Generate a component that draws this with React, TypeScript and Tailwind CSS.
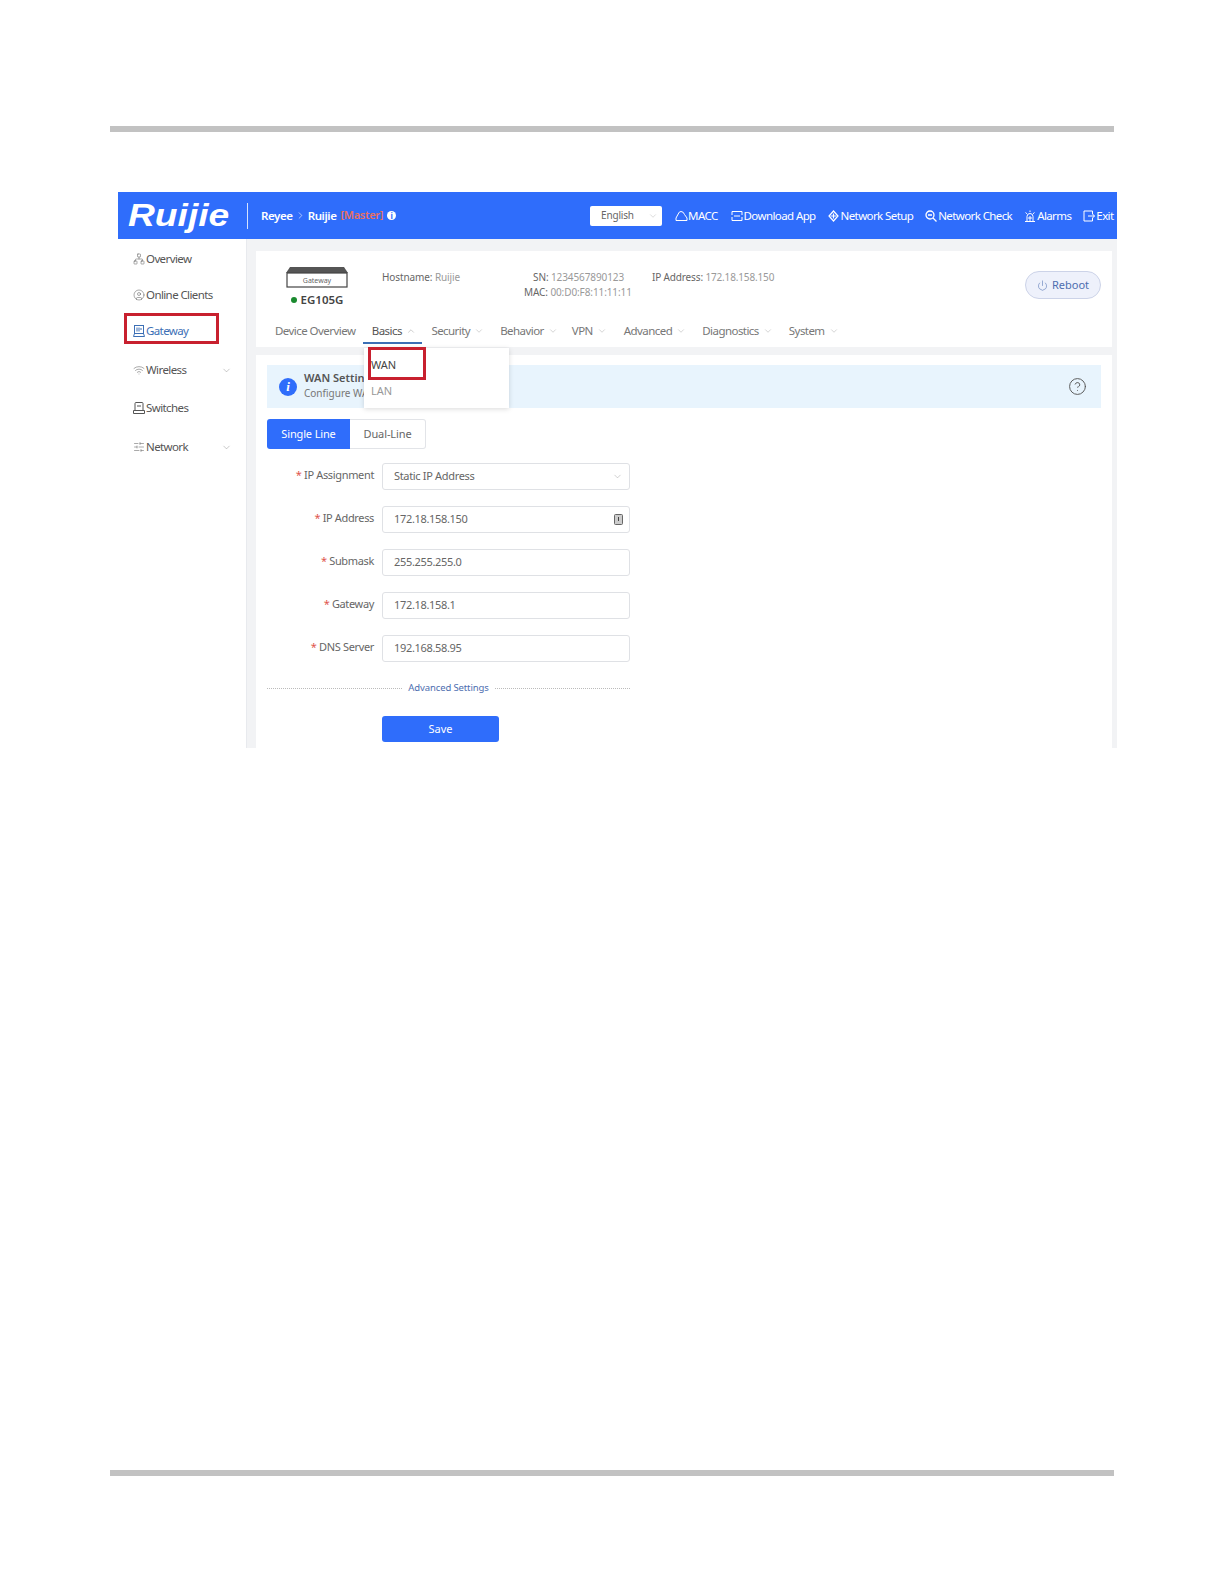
import React from "react";
import { ChevronDown, ChevronUp, ChevronRight, Network, CircleUser, Wifi, SlidersHorizontal, Power, CircleHelp } from "lucide-react";

const font = { fontFamily: '"Noto Sans", "Noto Sans CJK SC", sans-serif' };

function Side({ icon, label, active, chevron, cls }: { icon: React.ReactNode; label: string; active?: boolean; chevron?: boolean; cls: string }) {
  return (
    <div className={`flex items-center h-[20px] pl-[15px] pr-[14px] ${cls} ${active ? "text-[#3c6fb5]" : "text-[#555]"}`}>
      <span className="w-[13px] flex justify-start">{icon}</span>
      <span className="text-[11.5px] tracking-[-0.6px]">{label}</span>
      {chevron && <ChevronDown size={11} strokeWidth={1} className="ml-auto text-[#888]" />}
    </div>
  );
}

function TopLink({ icon, label, cls }: { icon: React.ReactNode; label: string; cls: string }) {
  return (
    <div className={`flex items-center shrink-0 text-white ${cls}`}>
      <span className="w-[13px] flex justify-start">{icon}</span>
      <span className="text-[11.5px] tracking-[-0.6px] whitespace-nowrap">{label}</span>
    </div>
  );
}

function Tab({ label, open, active, plain, cls }: { label: string; open?: boolean; active?: boolean; plain?: boolean; cls: string }) {
  return (
    <div className={`flex items-center whitespace-nowrap ${cls} ${active ? "text-[#555]" : "text-[#777]"}`}>
      <span className="text-[11.5px] tracking-[-0.55px]">{label}</span>
      {plain ? null : open ? <ChevronUp size={10} strokeWidth={1} className="ml-[4px] text-[#888]" /> : <ChevronDown size={10} strokeWidth={1} className="ml-[4px] text-[#999]" />}
    </div>
  );
}

function Row({ label, value, right, cls }: { label: string; value: string; right?: React.ReactNode; cls?: string }) {
  return (
    <div className={`flex items-center h-[27px] ${cls ?? "mt-[16px]"}`}>
      <div className="w-[107px] text-right text-[11px] tracking-[-0.35px] text-[#666] whitespace-nowrap -mt-[2px]">
        <span className="text-[#e0554d]">* </span>{label}
      </div>
      <div className="ml-[8px] w-[248px] h-[27px] border border-[#dfe1e5] rounded-[3px] flex items-center pl-[11px] pr-[6px] text-[11px] tracking-[-0.33px] text-[#666] bg-white">
        <span>{value}</span>
        <span className="ml-auto flex items-center">{right}</span>
      </div>
    </div>
  );
}

const stroke = { fill: "none", stroke: "currentColor", strokeWidth: 1 };

export default function App() {
  return (
    <div className="relative w-[1224px] h-[1584px] bg-white overflow-hidden" style={font}>
      <div className="pt-[126px] pl-[110px]">
        <div className="w-[1004px] h-[6px] bg-[#c2c2c2]" />
      </div>

      <div className="relative mt-[60px] ml-[118px] w-[999px] h-[556px] overflow-hidden bg-[#f2f3f5] flex flex-col">
        {/* header */}
        <div className="h-[47px] shrink-0 bg-[#2f6dfb] flex items-center">
          <span className="ml-[10px] shrink-0 w-[110px] text-white text-[31px] leading-none font-bold italic origin-left scale-x-[1.2]" style={{ fontFamily: '"Liberation Sans", sans-serif' }}>Ruijie</span>
          <div className="ml-[9px] shrink-0 w-px h-[26px] bg-white/80" />
          <span className="ml-[13px] shrink-0 text-white text-[11.5px] font-semibold tracking-[-0.4px]">Reyee</span>
          <ChevronRight size={11} strokeWidth={1.3} className="ml-[2px] shrink-0 text-white" />
          <span className="ml-[2px] shrink-0 text-white text-[11.5px] font-semibold tracking-[-0.4px]">Ruijie</span>
          <span className="ml-[4px] shrink-0 text-[#e8705f] text-[11px] font-semibold tracking-[-0.3px]">[Master]</span>
          <span className="ml-[4px] shrink-0 w-[9px] h-[9px] rounded-full bg-white text-[#2f6dfb] text-[8px] font-bold leading-[9px] text-center">i</span>
          <div className="ml-[194px] shrink-0 w-[72px] h-[20px] bg-white rounded-[2px] flex items-center pl-[11px] text-[10px] tracking-[-0.2px] text-[#666]">
            <span>English</span>
            <ChevronDown size={10} strokeWidth={1} className="ml-[14px] text-[#aaa]" />
          </div>
          <TopLink cls="ml-[13px]" label="MACC" icon={
            <svg width="13" height="12" viewBox="0 0 13 12" {...stroke}><path d="M1 10.5 H12 V8 L9.5 4.5 Q8.5 1.5 6 1.5 Q4 1.5 3.2 4 L1 8 Z" /></svg>
          } />
          <TopLink cls="ml-[13px]" label="Download App" icon={
            <svg width="12" height="12" viewBox="0 0 12 12" {...stroke}><path d="M1 5V1.5H11V5M1 7V10.5H11V7M3 6H9" /></svg>
          } />
          <TopLink cls="ml-[12px]" label="Network Setup" icon={
            <svg width="11" height="12" viewBox="0 0 11 12" {...stroke} strokeWidth="1.2"><path d="M5.5 1 L10 6 L5.5 11 L1 6 Z" /><path d="M2.5 6H8.5M5.5 3.5V8.5" /></svg>
          } />
          <TopLink cls="ml-[12px]" label="Network Check" icon={
            <svg width="12" height="12" viewBox="0 0 12 12" {...stroke} strokeWidth="1.3"><circle cx="5" cy="5" r="4" /><path d="M8 8L11.5 11.5M3 5H7" /></svg>
          } />
          <TopLink cls="ml-[12px]" label="Alarms" icon={
            <svg width="12" height="12" viewBox="0 0 12 12" {...stroke}><path d="M3 11V6.5Q3 3.5 6 3.5Q9 3.5 9 6.5V11M1 11.5H11M6 0.5V2M1.5 2.5L3 3.8M10.5 2.5L9 3.8M6 6V11M4 8H8" /></svg>
          } />
          <TopLink cls="ml-[12px]" label="Exit" icon={
            <svg width="12" height="12" viewBox="0 0 12 12" {...stroke}><path d="M9.5 4V1H1V11H9.5V8M5 6H11.5M9.5 4L11.5 6L9.5 8" /></svg>
          } />
        </div>

        <div className="flex flex-1 min-h-0">
          {/* sidebar */}
          <div className="w-[129px] shrink-0 bg-white pt-[10px] border-r border-[#e8eaee]">
            <Side cls="" label="Overview" icon={<Network size={12} strokeWidth={1} />} />
            <Side cls="mt-[16px]" label="Online Clients" icon={<CircleUser size={12} strokeWidth={1} />} />
            <Side cls="mt-[16px]" label="Gateway" active icon={
              <svg width="12" height="12" viewBox="0 0 12 12" {...stroke}><rect x="1.5" y="0.5" width="9" height="8" /><path d="M0.5 11.5H11.5L10.5 8.5H1.5ZM4 2.5V6.5M6 2.5V6.5M8 3V5" /></svg>
            } />
            <Side cls="mt-[19px]" label="Wireless" chevron icon={<Wifi size={12} strokeWidth={1} />} />
            <Side cls="mt-[18px]" label="Switches" icon={
              <svg width="12" height="12" viewBox="0 0 12 12" {...stroke}><path d="M2 8V1.5Q2 0.5 3 0.5H9Q10 0.5 10 1.5V8M0.5 11.5V8.5H11.5V11.5ZM4 4H8" /></svg>
            } />
            <Side cls="mt-[19px]" label="Network" chevron icon={<SlidersHorizontal size={12} strokeWidth={1} />} />
          </div>

          {/* main */}
          <div className="flex-1 min-w-0 pl-[9px] pr-[5px] pt-[12px]">
            <div className="h-[96px] bg-white flex flex-col">
              <div className="h-[66px] flex items-start">
                <div className="ml-[30px] mt-[16px] w-[62px] flex flex-col items-center">
                  <svg width="62" height="21" viewBox="0 0 62 21">
                    <path d="M4 0H58L62 6H0Z" fill="#555" />
                    <rect x="1" y="6" width="60" height="14" fill="#fff" stroke="#444" strokeWidth="1.2" />
                    <text x="31" y="16" textAnchor="middle" fontSize="7" fill="#666">Gateway</text>
                  </svg>
                  <div className="mt-[3px] flex items-center whitespace-nowrap">
                    <span className="w-[6px] h-[6px] rounded-full bg-[#1a8a2e]" />
                    <span className="ml-[4px] text-[11.5px] font-semibold text-[#444]">EG105G</span>
                  </div>
                </div>
                <div className="ml-[34px] mt-[19px] text-[10px] tracking-[-0.1px] text-[#666] whitespace-nowrap w-[142px]">Hostname: <span className="text-[#999]">Ruijie</span></div>
                <div className="mt-[19px] w-[128px] text-[10px] tracking-[-0.1px] leading-[15px] text-[#666] whitespace-nowrap">
                  <div className="pl-[9px]">SN: <span className="text-[#999]">1234567890123</span></div>
                  <div>MAC: <span className="text-[#999]">00:D0:F8:11:11:11</span></div>
                </div>
                <div className="mt-[19px] text-[10px] tracking-[-0.15px] text-[#666] whitespace-nowrap">IP Address: <span className="text-[#999]">172.18.158.150</span></div>
                <button className="ml-auto mr-[11px] mt-[20px] w-[76px] h-[28px] rounded-full border border-[#ccd3e8] bg-[#eef1fb] text-[#4d6eb0] text-[11px] flex items-center justify-center">
                  <Power size={11} strokeWidth={1.2} className="mr-[4px]" />Reboot
                </button>
              </div>
              <div className="h-[27px] flex items-center relative">
                <Tab cls="ml-[19px]" label="Device Overview" plain />
                <div className="ml-[8px] w-[59px] h-[27px] flex items-center justify-center pl-[2px] pt-[2px] border-b-2 border-[#3c6fb5]">
                  <Tab cls="" label="Basics" open active />
                </div>
                <Tab cls="ml-[9px]" label="Security" />
                <Tab cls="ml-[16px]" label="Behavior" />
                <Tab cls="ml-[14px]" label="VPN" />
                <Tab cls="ml-[17px]" label="Advanced" />
                <Tab cls="ml-[16px]" label="Diagnostics" />
                <Tab cls="ml-[16px]" label="System" />
              </div>
            </div>

            <div className="mt-[8px] h-[500px] bg-white pt-[10px] pl-[11px] pr-[11px]">
              <div className="h-[43px] bg-[#e8f4fd] flex items-center pl-[12px] pr-[14px]">
                <span className="w-[18px] h-[18px] rounded-full bg-[#2f6dfb] text-white text-[13px] font-bold italic leading-[18px] text-center" style={{ fontFamily: '"Liberation Serif", serif' }}>i</span>
                <div className="ml-[7px] -mt-[3px]">
                  <div className="text-[11px] leading-[15px] font-semibold text-[#555]">WAN Settings</div>
                  <div className="text-[10px] leading-[16px] text-[#777]">Configure WAN</div>
                </div>
                <CircleHelp size={19} strokeWidth={1.2} className="ml-auto text-[#555]" />
              </div>

              <div className="mt-[11px] flex h-[30px] w-[159px]">
                <div className="w-[83px] bg-[#2f6dfb] rounded-l-[3px] text-white text-[11px] tracking-[-0.15px] flex items-center justify-center">Single Line</div>
                <div className="flex-1 border border-l-0 border-[#e2e4e8] rounded-r-[3px] text-[#666] text-[11px] tracking-[-0.1px] flex items-center justify-center">Dual-Line</div>
              </div>

              <Row cls="mt-[14px]" label="IP Assignment" value="Static IP Address" right={<ChevronDown size={11} strokeWidth={1} className="text-[#999]" />} />
              <Row label="IP Address" value="172.18.158.150" right={
                <svg width="9" height="11" viewBox="0 0 9 11"><rect x="0.5" y="0.5" width="8" height="10" rx="1" fill="#ccc" stroke="#666" /><rect x="4" y="3" width="1" height="4" fill="#444" /></svg>
              } />
              <Row label="Submask" value="255.255.255.0" />
              <Row label="Gateway" value="172.18.158.1" />
              <Row label="DNS Server" value="192.168.58.95" />

              <div className="mt-[19px] w-[363px] flex items-center text-[9.5px] tracking-[-0.12px] text-[#4d6eb0] h-[14px]">
                <div className="flex-1 border-t border-dotted border-[#bbb]" />
                <span className="mx-[6px] whitespace-nowrap">Advanced Settings</span>
                <div className="flex-1 border-t border-dotted border-[#bbb]" />
              </div>
              <div className="mt-[21px] ml-[115px] w-[117px] h-[26px] bg-[#2f6dfb] rounded-[3px] text-white text-[11px] flex items-center justify-center">Save</div>
            </div>
          </div>
        </div>

        {/* dropdown and annotation boxes */}
        <div className="absolute left-[246px] top-[156px] w-[145px] h-[60px] bg-white shadow-[0_1px_5px_rgba(0,0,0,0.15)] text-[11px] pl-[7px]">
          <div className="pt-[9px] h-[35px] text-[#444]">WAN</div>
          <div className="text-[#999]">LAN</div>
        </div>
        <div className="absolute left-[250px] top-[155px] w-[58px] h-[33px] border-[3px] border-[#c8202f]" />
        <div className="absolute left-[6px] top-[121px] w-[95px] h-[31px] border-[3px] border-[#c8202f]" />
      </div>

      <div className="absolute left-[110px] top-[1470px] w-[1004px] h-[6px] bg-[#c2c2c2]" />
    </div>
  );
}
